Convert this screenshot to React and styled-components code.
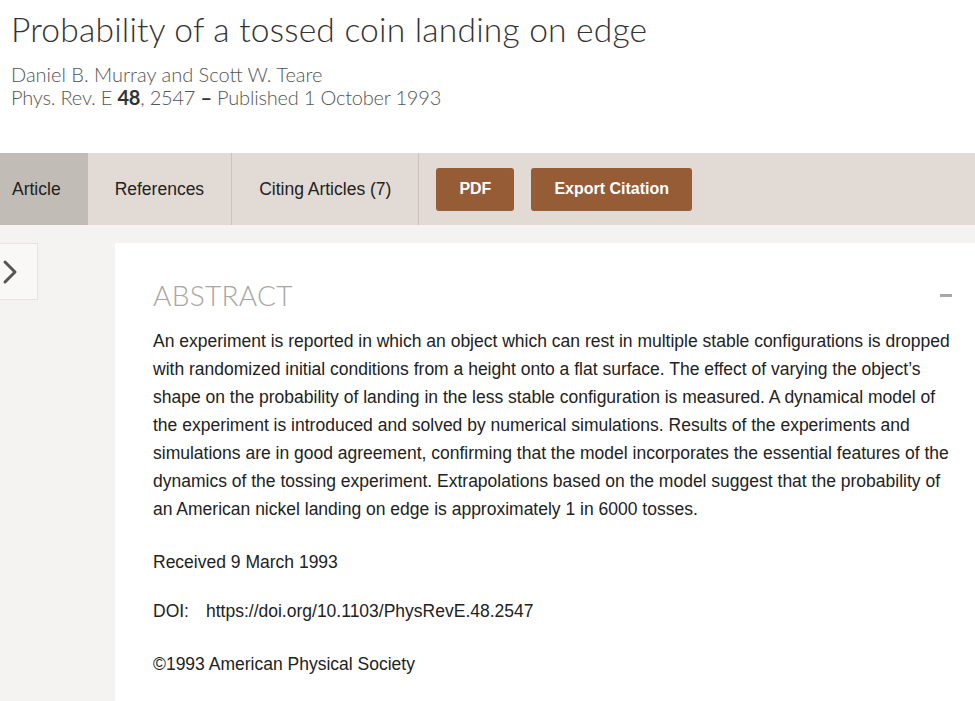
import React from "react"
import styled, { createGlobalStyle } from "styled-components"

const GlobalStyle = createGlobalStyle`
    html, body {
        margin: 0;
        padding: 0;
        background: #ffffff;
    }
    body {
        font-family: "Liberation Sans", Arial, sans-serif;
        color: #222;
    }
`

const Page = styled.div`
    width: 975px;
    height: 701px;
    overflow: hidden;
    display: flex;
    flex-direction: column;
`

const Header = styled.header`
    padding: 9px 11px 0;
    height: 153px;
    box-sizing: border-box;
    flex-shrink: 0;
`

const Title = styled.h1`
    margin: 0;
    font-family: Lato, "Open Sans", sans-serif;
    font-weight: 300;
    font-size: 33.6px;
    line-height: 40px;
    color: #333;
    letter-spacing: 0.2px;
`

const Meta = styled.div`
    margin-top: 14px;
    font-family: Lato, "Open Sans", sans-serif;
    font-weight: 300;
    font-size: 20px;
    line-height: 23px;
    color: #555;

    b {
        font-weight: 700;
        color: #333;
    }
`

const Journal = styled.span`
    letter-spacing: -0.2px;
`

const TabBar = styled.nav`
    height: 72px;
    flex-shrink: 0;
    background: #e2dad4;
    display: flex;
    align-items: stretch;
`

const Tab = styled.div`
    display: flex;
    align-items: center;
    box-sizing: border-box;
    padding: 0 ${(p) => (p.$active ? "26px 0 12px" : "27px")};
    font-size: 17.5px;
    color: #222;
    background: ${(p) => (p.$active ? "#c1bcb6" : "transparent")};
    border-right: 1px solid ${(p) => (p.$active ? "transparent" : "#cbc3bc")};
`

const Actions = styled.div`
    display: flex;
    align-items: center;
    gap: 17px;
    padding-left: 17px;
`

const Button = styled.button`
    height: 43px;
    padding: 0 23px;
    border: none;
    border-radius: 3px;
    background: #955c35;
    color: #fff;
    font-family: "Liberation Sans", Arial, sans-serif;
    font-weight: 700;
    font-size: 16px;
`

const Body = styled.div`
    flex: 1;
    background: #f4f3f1;
    display: flex;
    align-items: flex-start;
    padding-top: 18px;
`

const Toggle = styled.div`
    width: 38px;
    height: 57px;
    box-sizing: border-box;
    background: #f9f8f7;
    border: 1px solid #e6e3e0;
    border-left: none;
    display: flex;
    align-items: center;
    justify-content: flex-start;
    padding-left: 1px;
    flex-shrink: 0;
`

const Card = styled.section`
    margin-left: 77px;
    flex: 1;
    align-self: stretch;
    background: #fff;
    padding: 31px 23px 0 38px;
`

const SectionHead = styled.div`
    display: flex;
    justify-content: space-between;
    align-items: center;
    height: 42px;
`

const SectionTitle = styled.h2`
    margin: 0;
    font-family: Lato, "Open Sans", sans-serif;
    font-weight: 300;
    font-size: 28px;
    color: #a9a6a3;
    letter-spacing: 0.3px;
`

const Collapse = styled.span`
    width: 12px;
    height: 3px;
    background: #a8a8a8;
`

const Paragraph = styled.p`
    margin: ${(p) => p.$top || 0}px 0 0;
    font-size: 17.5px;
    line-height: 28px;
    color: #222;
`

const DoiLabel = styled.span`
    margin-right: 17px;
`

export default function App() {
    return (
        <Page>
            <GlobalStyle />
            <Header>
                <Title>Probability of a tossed coin landing on edge</Title>
                <Meta>
                    Daniel B. Murray and Scott W. Teare
                    <br />
                    <Journal>
                        Phys. Rev. E <b>48</b>, 2547 <b>–</b> Published 1 October 1993
                    </Journal>
                </Meta>
            </Header>
            <TabBar>
                <Tab $active>Article</Tab>
                <Tab>References</Tab>
                <Tab>Citing Articles (7)</Tab>
                <Actions>
                    <Button>PDF</Button>
                    <Button>Export Citation</Button>
                </Actions>
            </TabBar>
            <Body>
                <Toggle>
                    <svg width="18" height="28" viewBox="0 0 18 28">
                        <path
                            d="M4 4 L14 14 L4 24"
                            fill="none"
                            stroke="#555"
                            strokeWidth="3"
                            strokeLinecap="round"
                            strokeLinejoin="round"
                        />
                    </svg>
                </Toggle>
                <Card>
                    <SectionHead>
                        <SectionTitle>ABSTRACT</SectionTitle>
                        <Collapse />
                    </SectionHead>
                    <Paragraph $top={11}>
                        An experiment is reported in which an object which can rest in
                        multiple stable configurations is dropped with randomized initial
                        conditions from a height onto a flat surface. The effect of varying
                        the object’s shape on the probability of landing in the less stable
                        configuration is measured. A dynamical model of the experiment is
                        introduced and solved by numerical simulations. Results of the
                        experiments and simulations are in good agreement, confirming that
                        the model incorporates the essential features of the dynamics of the
                        tossing experiment. Extrapolations based on the model suggest that
                        the probability of an American nickel landing on edge is
                        approximately 1 in 6000 tosses.
                    </Paragraph>
                    <Paragraph $top={25}>Received 9 March 1993</Paragraph>
                    <Paragraph $top={21}>
                        <DoiLabel>DOI:</DoiLabel>https://doi.org/10.1103/PhysRevE.48.2547
                    </Paragraph>
                    <Paragraph $top={25}>©1993 American Physical Society</Paragraph>
                </Card>
            </Body>
        </Page>
    )
}
